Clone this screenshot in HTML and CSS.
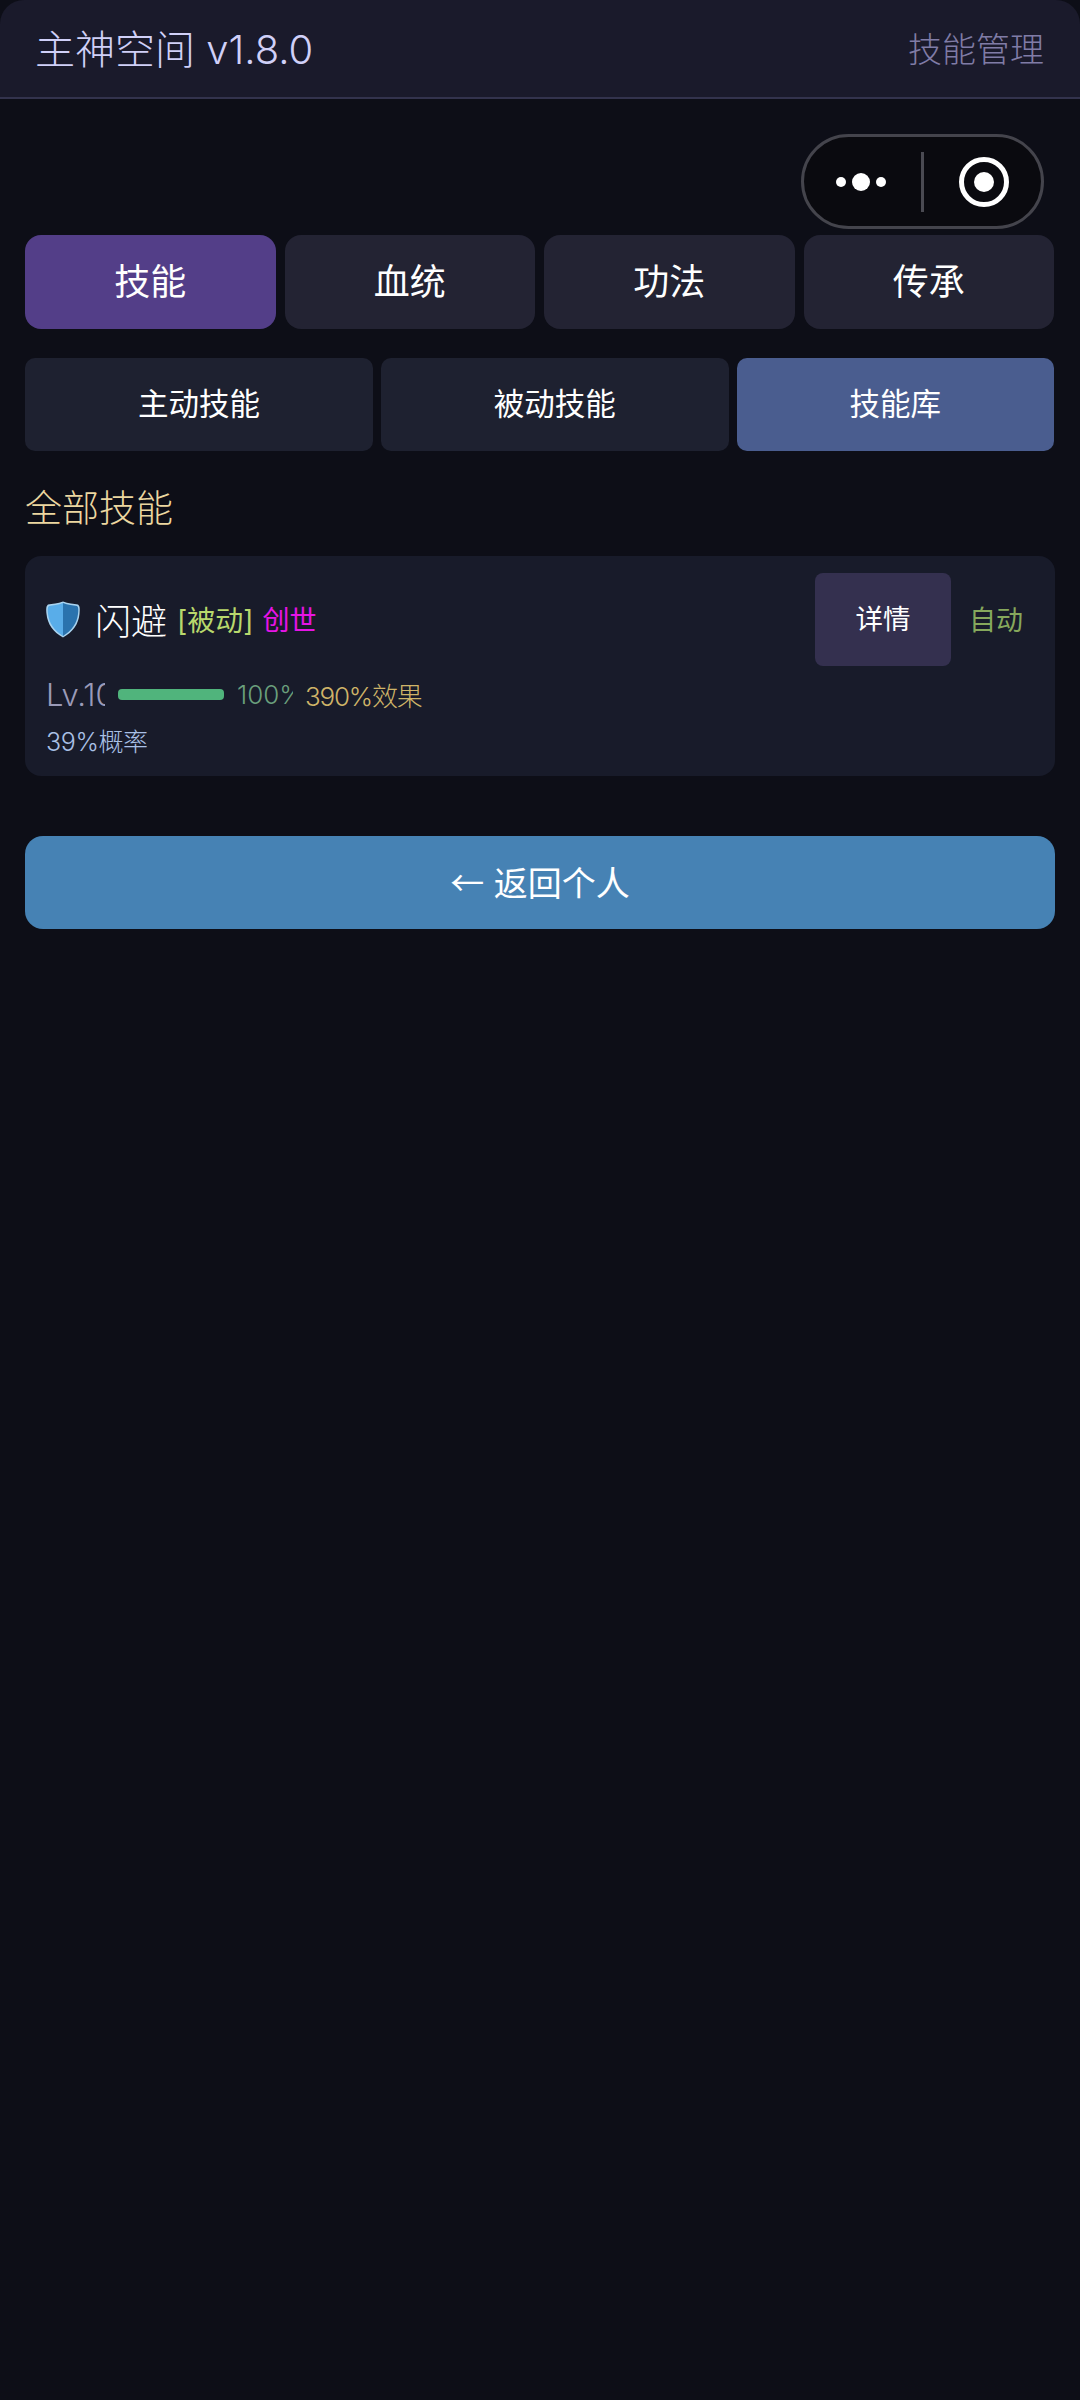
FILE: index.html
```html
<!DOCTYPE html>
<html lang="zh-CN">
<head>
    <meta charset="UTF-8">
    <meta name="viewport" content="width=device-width, initial-scale=1.0">
    <title>主神空间</title>
    <link rel="stylesheet" href="styles.css">
</head>
<body>
    <div class="header">
        <div class="title">主神空间 v1.8.0</div>
        <div class="subtitle">技能管理</div>
    </div>

    <!-- 小程序胶囊 -->
    <div class="capsule">
        <svg class="capsule-icon" width="243" height="95" viewBox="0 0 243 95">
            <circle cx="40" cy="48" r="5" fill="#fff"/>
            <circle cx="60" cy="48" r="9" fill="#fff"/>
            <circle cx="80" cy="48" r="5" fill="#fff"/>
            <rect x="120" y="18" width="3" height="60" fill="#4a4a52"/>
            <circle cx="183" cy="48" r="22.5" fill="none" stroke="#fff" stroke-width="5"/>
            <circle cx="183" cy="48" r="10" fill="#fff"/>
        </svg>
    </div>

    <div class="main">
        <div class="tabs">
            <div class="tab active">技能</div>
            <div class="tab">血统</div>
            <div class="tab">功法</div>
            <div class="tab">传承</div>
        </div>

        <div class="sub-tabs">
            <div class="sub-tab">主动技能</div>
            <div class="sub-tab">被动技能</div>
            <div class="sub-tab active">技能库</div>
        </div>

        <div class="section-title">全部技能</div>

        <div class="card">
            <div class="card-top">
                <div class="skill-name">
                    <svg class="shield" width="34" height="37" viewBox="0 0 34 37">
                        <path d="M17 0.5C22 2.5 28 3 32 3.5C34 5 34 8 33.5 13C32.5 23 27 31 17 36.5C7 31 1.5 23 0.5 13C0 8 0 5 2 3.5C6 3 12 2.5 17 0.5Z" fill="#a9d3ef"/>
                        <path d="M17 2C12 4 7 4.5 3 5C1.5 6 1.5 9 2 13C3 22 8 29.5 17 35Z" fill="#59ade9"/>
                        <path d="M17 2C22 4 27 4.5 31 5C32.5 6 32.5 9 32 13C31 22 26 29.5 17 35Z" fill="#2a73ae"/>
                    </svg>
                    <span class="name">闪避</span>
                    <span class="type">[被动]</span>
                    <span class="rank">创世</span>
                </div>
                <div class="detail-btn">详情</div>
                <div class="auto">自动</div>
            </div>
            <div class="level-row">
                <div class="level">Lv.10</div>
                <div class="progress"><div class="progress-bar" style="width: 100%"></div></div>
                <div class="percent">100%</div>
                <div class="effect">390%效果</div>
            </div>
            <div class="chance">39%概率</div>
        </div>

        <div class="back-btn"><span class="arrow">←</span> 返回个人</div>
    </div>
</body>
</html>
```

FILE: styles.css
```css
* {
    box-sizing: border-box;
    margin: 0;
    padding: 0;
}

html, body {
    height: 100%;
}

body {
    position: relative;
    font-family: Inter, 'Noto Sans CJK SC', sans-serif;
    font-weight: 400;
    background: #0d0e17;
    color: #fff;
}

.header {
    display: flex;
    justify-content: space-between;
    align-items: center;
    height: 99px;
    padding: 0 36px 3px 35px;
    background: #1a1a2b;
    border-bottom: 2px solid #33334d;
    border-radius: 24px 24px 0 0;
}

.title {
    font-size: 40px;
    font-weight: 300;
    color: #d0d0f8;
}

.subtitle {
    font-size: 34px;
    font-weight: 300;
    color: #807ca6;
}

.capsule {
    position: absolute;
    top: 134px;
    left: 801px;
    width: 243px;
    height: 95px;
    background: #0a0a0f;
    border: 3px solid #44444c;
    border-radius: 48px;
}

.capsule-icon {
    position: absolute;
    top: -3px;
    left: -3px;
}

.main {
    padding: 136px 25px 0;
}

.tabs {
    display: flex;
    gap: 9px;
    margin-right: 1px;
}

.tab {
    flex: 1;
    height: 94px;
    line-height: 94px;
    text-align: center;
    font-size: 36px;
    background: #232333;
    border-radius: 16px;
}

.tab.active {
    background: #533e88;
}

.sub-tabs {
    display: flex;
    gap: 8px;
    margin-top: 29px;
    margin-right: 1px;
}

.sub-tab {
    flex: 1 1 auto;
    height: 93px;
    line-height: 92px;
    text-align: center;
    font-size: 30.5px;
    background: #1e2130;
    border-radius: 10px;
}

.sub-tab.active {
    background: #4a5d8f;
}

.section-title {
    margin-top: 33px;
    font-size: 37px;
    font-weight: 300;
    line-height: 50px;
    color: #ecd7a0;
}

.card {
    margin-top: 22px;
    height: 220px;
    padding: 17px 21px 0;
    background: #181b2a;
    border-radius: 16px;
}

.card-top {
    display: flex;
    align-items: center;
    height: 93px;
}

.skill-name {
    flex: 1;
    display: flex;
    align-items: center;
    padding-bottom: 2px;
}

.shield {
    margin-right: 15px;
    margin-top: 2px;
}

.name {
    font-size: 36px;
    font-weight: 300;
    margin-right: 10px;
    color: #fff;
}

.type {
    font-size: 28px;
    margin-right: 9px;
    color: #b8d86c;
}

.rank {
    font-size: 27px;
    color: #e614e6;
}

.detail-btn {
    width: 136px;
    height: 93px;
    line-height: 92px;
    text-align: center;
    font-size: 27.5px;
    background: #34304f;
    border-radius: 8px;
}

.auto {
    margin-left: 18px;
    margin-right: 11px;
    font-size: 27px;
    color: #86a85c;
    padding-bottom: 2px;
}

.level-row {
    display: flex;
    align-items: center;
    margin-top: 10px;
    height: 36px;
}

.level {
    width: 59px;
    overflow: hidden;
    white-space: nowrap;
    font-size: 31px;
    font-weight: 300;
    color: #9a9ab8;
}

.progress {
    width: 106px;
    height: 11px;
    margin-left: 13px;
    background: #2a2d40;
    border-radius: 4px;
    overflow: hidden;
}

.progress-bar {
    height: 100%;
    background: #50b47c;
}

.percent {
    width: 56px;
    margin-left: 13px;
    overflow: hidden;
    white-space: nowrap;
    font-size: 26px;
    font-weight: 300;
    color: #6a9f7c;
}

.effect {
    margin-left: 12px;
    font-size: 26px;
    font-weight: 300;
    letter-spacing: -1.2px;
    color: #cfb468;
}

.chance {
    margin-top: 10px;
    font-size: 25px;
    font-weight: 300;
    letter-spacing: -0.4px;
    color: #a9c0e6;
}

.back-btn {
    margin-top: 60px;
    height: 93px;
    line-height: 91px;
    text-align: center;
    font-size: 34px;
    background: #4682b4;
    border-radius: 18px;
}

.arrow {
    font-family: 'Noto Sans CJK SC', sans-serif;
}
```
